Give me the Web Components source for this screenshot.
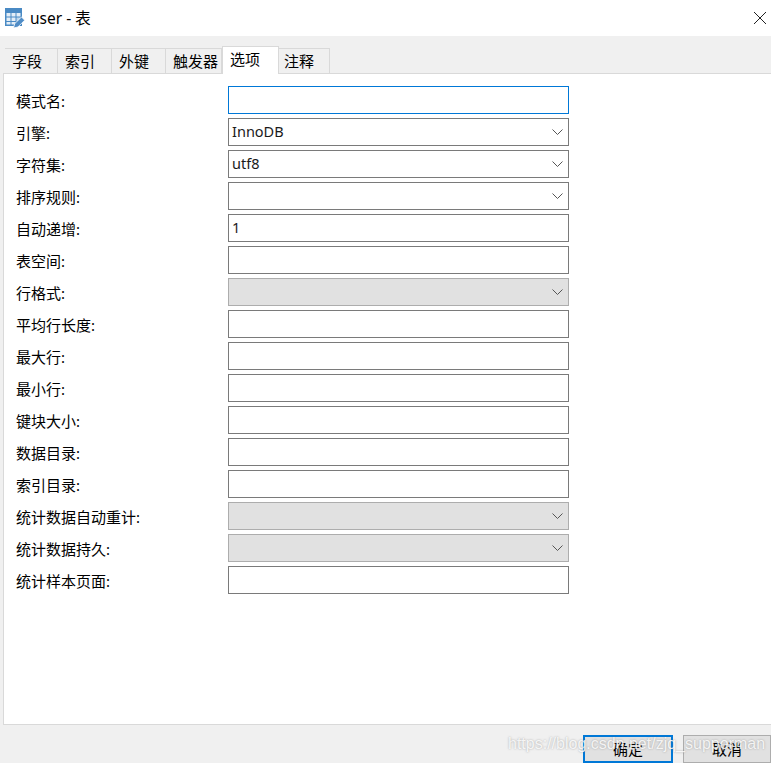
<!DOCTYPE html>
<html lang="zh">
<head>
<meta charset="utf-8">
<title>user - 表</title>
<style>
    html, body { margin: 0; padding: 0; background: #f0f0f0; }
    body { font-family: "Noto Sans", "Noto Sans CJK SC", sans-serif; font-size: 15px; color: #000; }
</style>
</head>
<body>
<table-dialog>
    <dialog-titlebar slot="title" text="user - 表"></dialog-titlebar>
    <tab-strip slot="tabs" active="4" items="字段,索引,外键,触发器,选项,注释"></tab-strip>
    <form-row label="模式名:" focused></form-row>
    <form-row label="引擎:" kind="select" value="InnoDB"></form-row>
    <form-row label="字符集:" kind="select" value="utf8"></form-row>
    <form-row label="排序规则:" kind="select"></form-row>
    <form-row label="自动递增:" value="1"></form-row>
    <form-row label="表空间:"></form-row>
    <form-row label="行格式:" kind="select" disabled></form-row>
    <form-row label="平均行长度:"></form-row>
    <form-row label="最大行:"></form-row>
    <form-row label="最小行:"></form-row>
    <form-row label="键块大小:"></form-row>
    <form-row label="数据目录:"></form-row>
    <form-row label="索引目录:"></form-row>
    <form-row label="统计数据自动重计:" kind="select" disabled></form-row>
    <form-row label="统计数据持久:" kind="select" disabled></form-row>
    <form-row label="统计样本页面:"></form-row>
    <dialog-button slot="buttons" primary>确定</dialog-button>
    <dialog-button slot="buttons">取消</dialog-button>
</table-dialog>

<script>
;(function(document){
    'use strict';

    class TableDialog extends HTMLElement {
        constructor(){
            super();
            this.attachShadow({ mode: 'open' }).innerHTML = `
                <style>
                    :host {
                        display: flex;
                        flex-direction: column;
                        position: relative;
                        height: 763px;
                        overflow: hidden;
                        background: #f0f0f0;
                    }
                    .gap { height: 10px; flex: none; }
                    .panel {
                        flex: none;
                        height: 652px;
                        margin-left: 3px;
                        padding: 12px 0 0 12px;
                        box-sizing: border-box;
                        background: #fff;
                        border-left: 1px solid #d9d9d9;
                        border-bottom: 1px solid #d9d9d9;
                        border-top: 1px solid #d9d9d9;
                        display: flex;
                        flex-direction: column;
                        gap: 4px;
                    }
                    .footer {
                        flex: none;
                        display: flex;
                        justify-content: flex-end;
                        gap: 10px;
                        padding-top: 10px;
                    }
                    .mark {
                        position: absolute;
                        left: 508px;
                        top: 735px;
                        font: 16px "Liberation Sans", sans-serif;
                        color: rgba(255,255,255,.85);
                        text-shadow: 0 0 2px rgba(100,100,100,.55);
                        white-space: nowrap;
                    }
                </style>
                <slot name="title"></slot>
                <div class="gap"></div>
                <slot name="tabs"></slot>
                <div class="panel"><slot></slot></div>
                <div class="footer"><slot name="buttons"></slot></div>
                <div class="mark">https://blog.csdn.net/zjq_supperman</div>
            `;
        }
    }

    class DialogTitlebar extends HTMLElement {
        constructor(){
            super();
            this.attachShadow({ mode: 'open' }).innerHTML = `
                <style>
                    :host {
                        display: flex;
                        flex: none;
                        align-items: center;
                        height: 36px;
                        background: #fff;
                        padding-left: 5px;
                    }
                    .icon { width: 20px; height: 20px; margin-right: 5px; flex: none; }
                    .text { font-size: 15.5px; flex: 1; position: relative; top: -1px; }
                    .close { width: 14px; height: 14px; margin-right: 4px; flex: none; }
                </style>
                <svg class="icon" viewBox="0 0 20 20">
                    <path d="M0 0h17v18H0z" fill="#4a8ac4"/>
                    <path d="M1.500 5h4v3.500h-4zM6.500 5h4v3.500h-4zM11.500 5h4v3.500h-4zM1.500 9.500h4V13h-4zM6.500 9.500h4V13h-4zM1.500 14h4v2.500h-4zM6.500 14h4v2.500h-4z" fill="#e4eef7"/>
                    <path d="M11.500 9.500h4V13h-4z" fill="#bcd6ec"/>
                    <path d="M8.500 20l1.200-4.300L16.500 9l3.200 3.200-6.800 6.800z" fill="#4f8cc6" stroke="#fff" stroke-width=".8"/>
                </svg>
                <span class="text"></span>
                <svg class="close" viewBox="0 0 14 14"><path d="M1 1l12 12M13 1L1 13" stroke="#222" stroke-width="1" fill="none"/></svg>
            `;
        }
        connectedCallback(){
            this.shadowRoot.querySelector('.text').textContent = this.getAttribute('text');
        }
    }

    class TabStrip extends HTMLElement {
        constructor(){
            super();
            this.attachShadow({ mode: 'open' }).innerHTML = `
                <style>
                    :host {
                        display: flex;
                        flex: none;
                        align-items: flex-end;
                        height: 28px;
                        padding-left: 5px;
                        margin-bottom: -1px;
                        position: relative;
                        z-index: 1;
                    }
                    .tab {
                        box-sizing: border-box;
                        height: 25px;
                        margin-bottom: 1px;
                        padding: 1px 0 0 7px;
                        border: 1px solid #d9d9d9;
                        border-left-width: 0;
                        border-bottom-width: 0;
                        background: #f0f0f0;
                        line-height: 22px;
                        white-space: nowrap;
                        overflow: hidden;
                    }
                    .tab:first-child { border-left-width: 1px; padding-left: 5px; }
                    .tab:last-child { padding-left: 5px; }
                    .tab.on {
                        height: 28px;
                        margin-bottom: 0;
                        padding: 0 0 0 7px;
                        background: #fff;
                        border-left-width: 1px;
                        line-height: 24px;
                    }
                </style>
            `;
        }
        connectedCallback(){
            let widths = [53, 54, 54, 56, 57, 51];
            let active = parseInt(this.getAttribute('active'), 10);
            this.getAttribute('items').split(',').forEach((name, i) => {
                let tab = document.createElement('div');
                tab.className = 'tab' + (i === active ? ' on' : '');
                tab.style.width = widths[i] + 'px';
                tab.textContent = name;
                this.shadowRoot.appendChild(tab);
            });
        }
    }

    class FormRow extends HTMLElement {
        constructor(){
            super();
            this.attachShadow({ mode: 'open' }).innerHTML = `
                <style>
                    :host {
                        display: flex;
                        flex: none;
                        align-items: center;
                        height: 28px;
                    }
                    .label { width: 212px; flex: none; }
                    .box {
                        box-sizing: border-box;
                        width: 341px;
                        height: 28px;
                        border: 1px solid #7a7a7a;
                        background: #fff;
                        display: flex;
                        align-items: center;
                        justify-content: space-between;
                        padding: 0 5px 0 3px;
                        color: #1a1a1a;
                    }
                    :host([focused]) .box { border-color: #0078d7; }
                    :host([disabled]) .box { background: #e1e1e1; border-color: #adadad; }
                    .value { font-size: 14.5px; position: relative; top: -1px; }
                    svg { width: 11px; height: 6px; display: none; }
                    :host([kind="select"]) svg { display: block; }
                </style>
                <span class="label"></span>
                <div class="box">
                    <span class="value"></span>
                    <svg viewBox="0 0 11 6"><path d="M.5.5l5 5 5-5" fill="none" stroke="#555" stroke-width="1"/></svg>
                </div>
            `;
        }
        connectedCallback(){
            this.shadowRoot.querySelector('.label').textContent = this.getAttribute('label');
            this.shadowRoot.querySelector('.value').textContent = this.getAttribute('value') || '';
        }
    }

    class DialogButton extends HTMLElement {
        constructor(){
            super();
            this.attachShadow({ mode: 'open' }).innerHTML = `
                <style>
                    :host {
                        box-sizing: border-box;
                        display: block;
                        flex: none;
                        width: 88px;
                        height: 28px;
                        border: 1px solid #adadad;
                        background: #e1e1e1;
                        text-align: center;
                        line-height: 26px;
                    }
                    :host([primary]) {
                        width: 90px;
                        border: 2px solid #0078d7;
                        line-height: 24px;
                    }
                </style>
                <slot></slot>
            `;
        }
    }

    customElements.define('table-dialog', TableDialog);
    customElements.define('dialog-titlebar', DialogTitlebar);
    customElements.define('tab-strip', TabStrip);
    customElements.define('form-row', FormRow);
    customElements.define('dialog-button', DialogButton);

})(document);
</script>
</body>
</html>
